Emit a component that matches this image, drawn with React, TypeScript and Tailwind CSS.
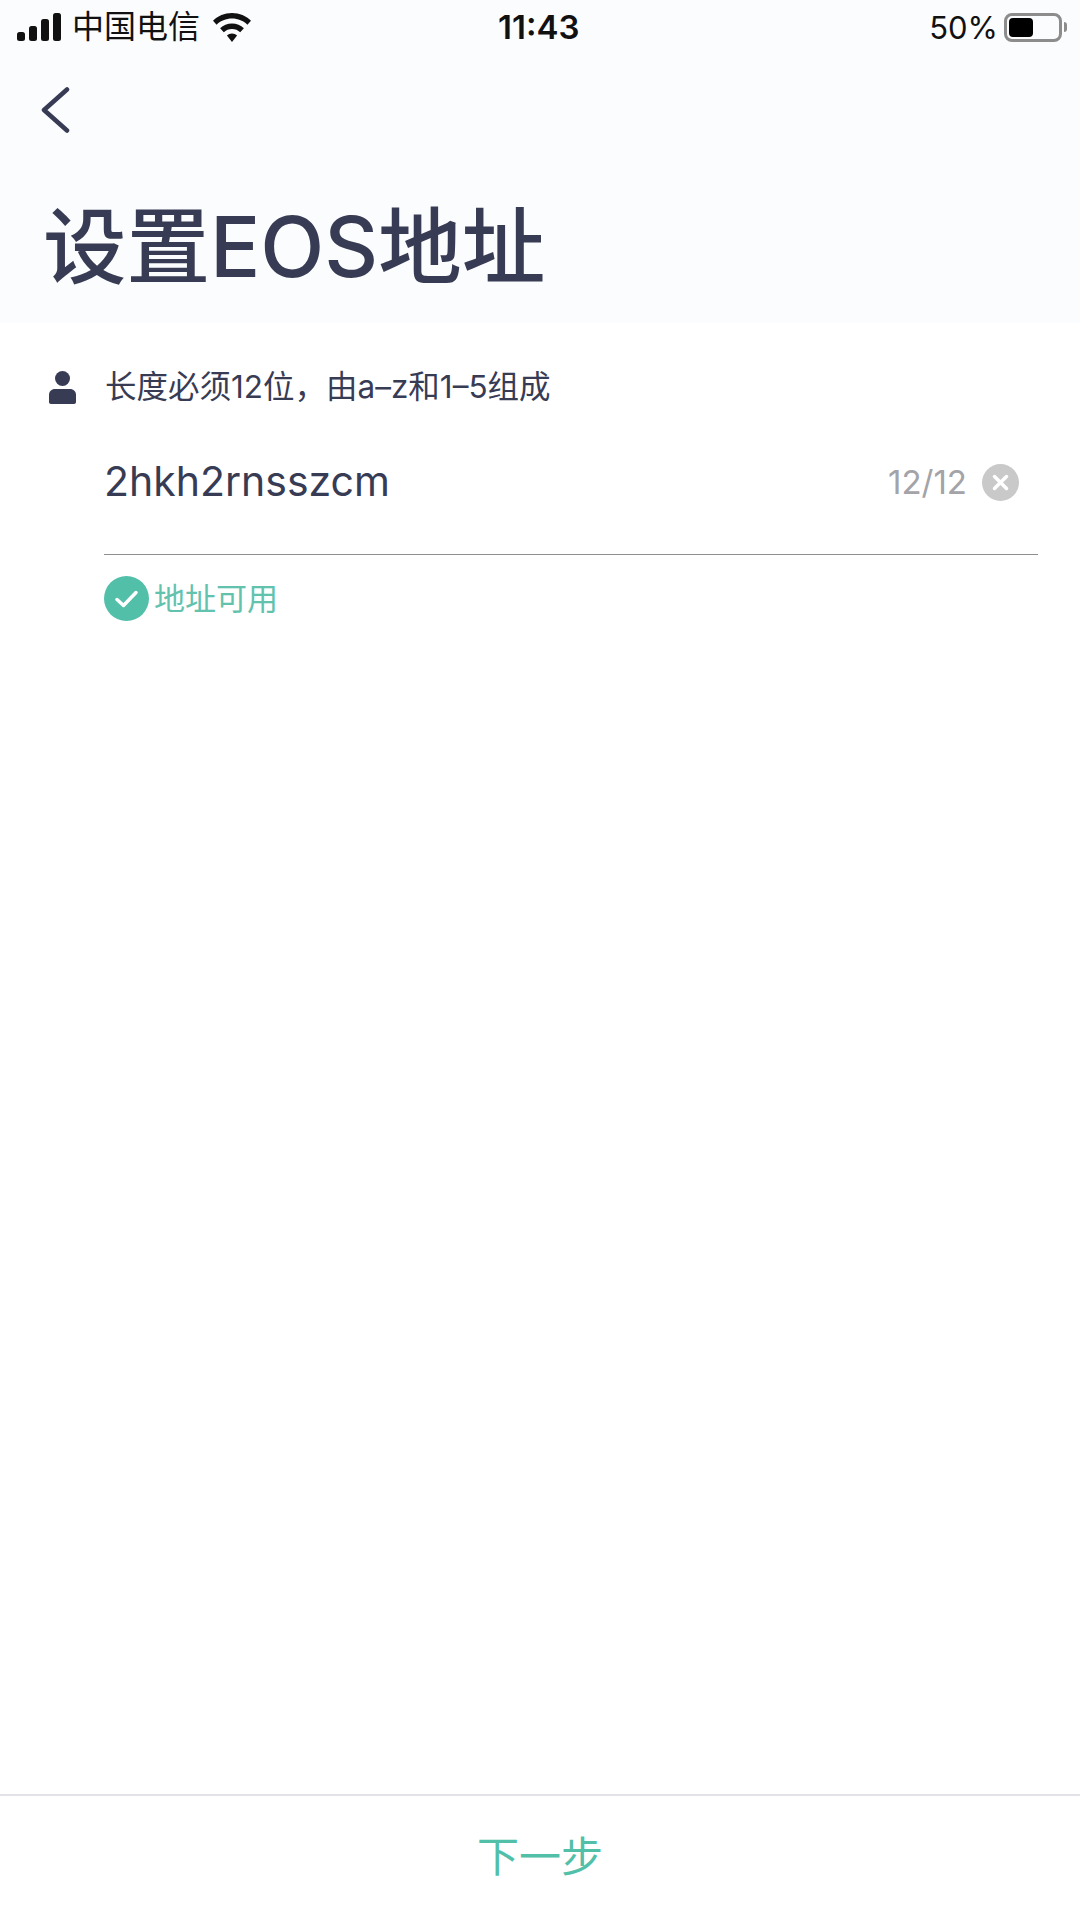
const InkColor = '#383b54';

function SignalIcon() {
  return (
    <svg width="45" height="28" viewBox="0 0 45 28" fill="#111">
      <rect x="0" y="19" width="8" height="9" rx="2.5" />
      <rect x="12" y="13" width="8" height="15" rx="2.5" />
      <rect x="24" y="6" width="8" height="22" rx="2.5" />
      <rect x="36" y="0" width="8" height="28" rx="2.5" />
    </svg>
  );
}

function WifiIcon() {
  return (
    <svg width="40" height="29" viewBox="0 0 40 29" fill="#111">
      <path d="M20 0C12.5 0 5.8 3 1 7.8l3.6 3.9C8.5 7.9 14 5.6 20 5.6s11.500 2.300 15.400 6.100L39 7.800C34.200 3 27.500 0 20 0z" />
      <path d="M20 10.500c-4.600 0-8.800 1.800-11.900 4.800l3.700 3.900c2.100-2.100 5-3.300 8.200-3.300s6.100 1.200 8.200 3.300l3.700-3.900c-3.100-3-7.300-4.800-11.900-4.800z" />
      <path d="M20 20.500c-2 0-3.800.8-5.100 2.100L20 29l5.100-6.400c-1.300-1.300-3.100-2.100-5.100-2.100z" />
    </svg>
  );
}

function PersonIcon() {
  return (
    <svg width="27" height="33" viewBox="0 0 27 33" fill={InkColor}>
      <circle cx="13.500" cy="7.500" r="7.500" />
      <path d="M6 18h15c3.500 0 6 2.500 6 6v7c0 1.200-.8 2-2 2H2c-1.200 0-2-.8-2-2v-7c0-3.500 2.500-6 6-6z" />
    </svg>
  );
}

export default function App() {
  return (
    <div className="flex min-h-[1920px] w-[1080px] flex-col bg-white font-['Inter','Noto_Sans_CJK_SC',sans-serif]">
      <div className="flex h-[323px] flex-col bg-[#fbfcfe]">
        {/* status bar */}
        <div className="relative flex h-[54px] items-center justify-between pl-[17px] pr-[13px] text-[#111]">
          <div className="flex items-center">
            <SignalIcon />
            <span className="ml-[10px] text-[32px] leading-none">中国电信</span>
            <span className="ml-[12px]"><WifiIcon /></span>
          </div>
          <span className="absolute left-[498px] top-[9px] text-[33px] font-semibold leading-[36px]">11:43</span>
          <div className="flex items-center">
            <span className="text-[31px] leading-none">50%</span>
            <div className="ml-[6px] flex h-[29px] w-[58px] items-center rounded-[8px] border-[3px] border-[#8c8c8c] p-[2px]">
              <div className="h-full w-[24px] rounded-[4px] bg-black" />
            </div>
            <div className="ml-[2px] h-[10px] w-[3px] rounded-r-full bg-[#8c8c8c]" />
          </div>
        </div>

        <div className="pl-[40px] pt-[33px]">
          <svg width="30" height="46" viewBox="0 0 30 46" fill="none" stroke={InkColor} strokeWidth="4.500" strokeLinecap="round" strokeLinejoin="round">
            <path d="M27 2.500 4 23l23 20.500" />
          </svg>
        </div>

        <h1 className="pl-[43px] pt-[66px] text-[83.5px] font-medium leading-[96px] text-[#383b54]">设置EOS地址</h1>
      </div>

      <div className="flex flex-1 flex-col">
        <div className="flex items-center pl-[49px] pt-[45px]">
          <PersonIcon />
          <span className="ml-[29px] text-[31.5px] font-normal leading-[38px] text-[#383b54]">长度必须12位，由a–z和1–5组成</span>
        </div>

        <div className="ml-[104px] mr-[42px] flex h-[149px] items-start border-b border-[#8f8f8f] pt-[51px]">
          <span className="flex-1 text-[41px] leading-[48px] text-[#383b54]">2hkh2rnsszcm</span>
          <span className="pt-px text-[33px] leading-[48px] text-[#a3a3a8]">12/12</span>
          <div className="ml-[15px] mr-[19px] mt-[7px] flex h-[37px] w-[37px] items-center justify-center rounded-full bg-[#c9c9c9]">
            <svg width="17" height="17" viewBox="0 0 17 17" fill="none" stroke="#fff" strokeWidth="3.500" strokeLinecap="round">
              <path d="M2.500 2.500l12 12M14.500 2.500l-12 12" />
            </svg>
          </div>
        </div>

        <div className="ml-[104px] mt-[21px] flex items-center">
          <div className="flex h-[45px] w-[45px] items-center justify-center rounded-full bg-[#52bfa9]">
            <svg width="25" height="20" viewBox="0 0 25 20" fill="none" stroke="#fff" strokeWidth="3.500" strokeLinecap="round" strokeLinejoin="round">
              <path d="M3 10.500l6.500 6L22 3.500" />
            </svg>
          </div>
          <span className="ml-[5px] text-[31px] leading-[40px] text-[#62c2ad]">地址可用</span>
        </div>
      </div>

      <div className="flex h-[126px] items-center justify-center border-t-2 border-[#e2e2e8] pb-[4px] text-[42px] text-[#52bfa9]">
        下一步
      </div>
    </div>
  );
}
